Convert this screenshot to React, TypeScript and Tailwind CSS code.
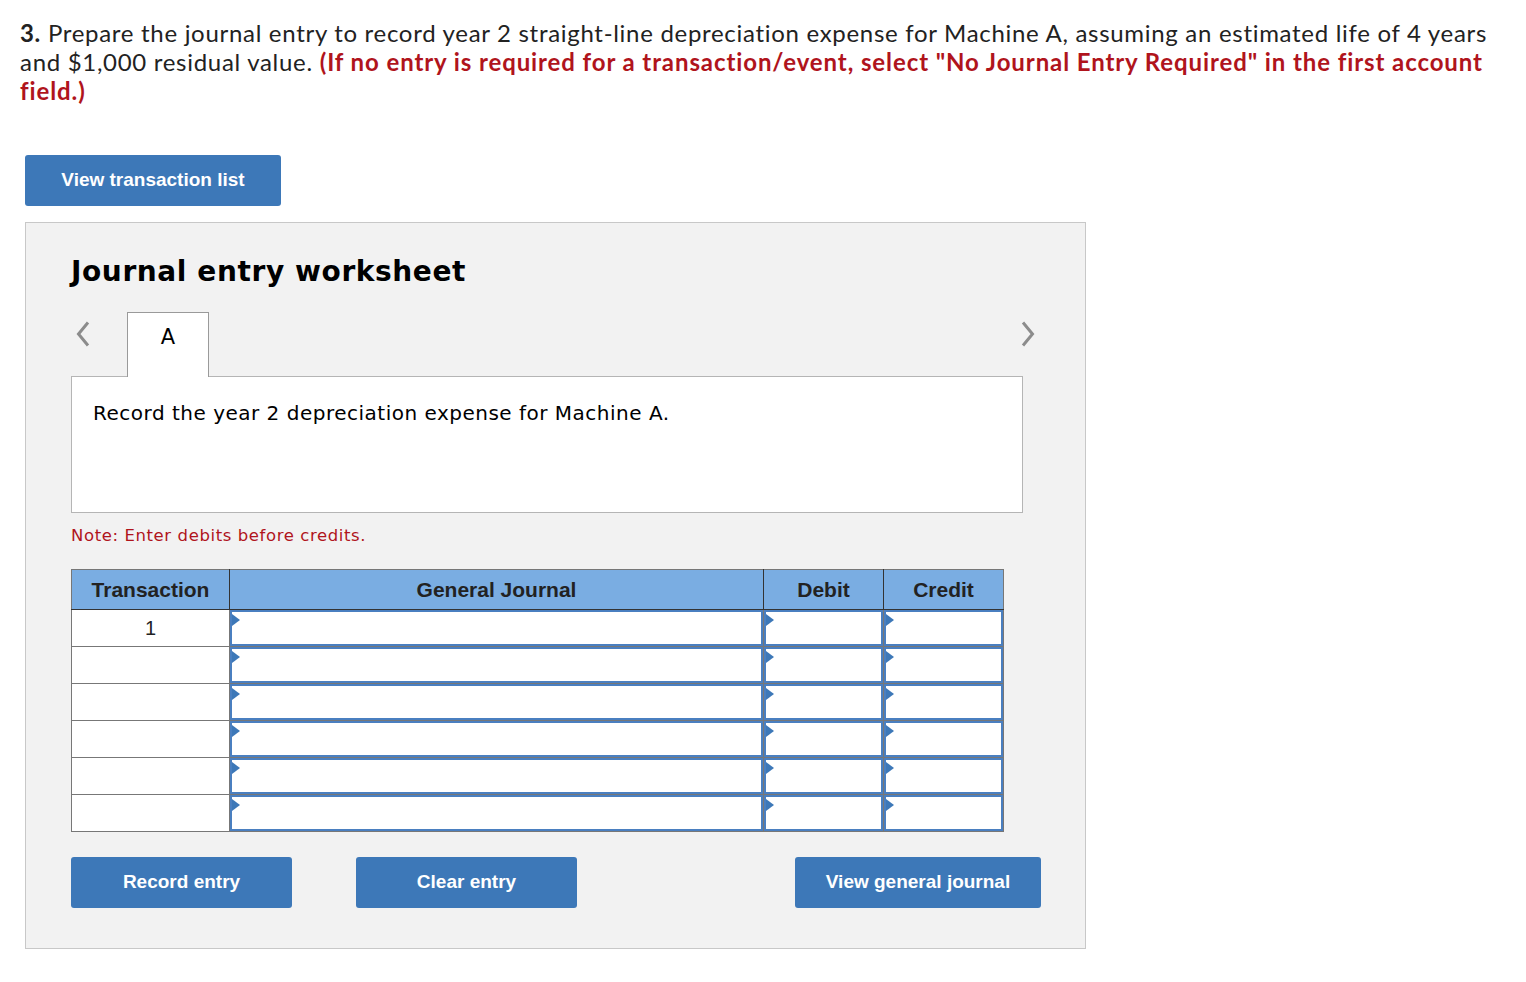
import React from "react"

const rows = [1, 2, 3, 4, 5, 6]

const Marker = () => (
  <span className="absolute left-0 top-[2px] w-0 h-0 border-y-[6px] border-y-transparent border-l-[8px] border-l-[#3d78b8]" />
)

const InputCell = () => (
  <td className="border border-[#777] p-0 h-[37px]">
    <div className="relative h-full w-full border-2 border-[#4a7fc0] bg-white">
      <Marker />
    </div>
  </td>
)

const Chevron = ({ dir }: { dir: "left" | "right" }) => (
  <svg width="16" height="26" viewBox="0 0 16 26" className="text-[#8c8c8c]">
    <path
      d={dir === "left" ? "M13 1.5 L3.5 13 L13 24.5" : "M3 1.5 L12.5 13 L3 24.5"}
      fill="none"
      stroke="currentColor"
      strokeWidth="3"
    />
  </svg>
)

const BlueButton = ({ label, className }: { label: string; className: string }) => (
  <button
    className={`h-[51px] rounded-[3px] bg-[#3d78b8] text-white font-bold text-[19px] font-['Liberation_Sans',Arial,sans-serif] ${className}`}
  >
    {label}
  </button>
)

export default function App() {
  return (
    <div className="bg-white min-h-[982px] px-5 pt-[18px] font-['Liberation_Sans',Arial,sans-serif]">
      <p className="font-['Lato',sans-serif] text-[24px] leading-[29px] tracking-[0.7px] text-[#222] whitespace-nowrap">
        <b>3.</b> Prepare the journal entry to record year 2 straight-line depreciation expense for Machine A, assuming an estimated life of 4 years
        <br />
        and $1,000 residual value.{" "}
        <b className="text-[#b0141c] tracking-[0.9px]">
          (If no entry is required for a transaction/event, select "No Journal Entry Required" in the first account
          <br />
          field.)
        </b>
      </p>

      <BlueButton label="View transaction list" className="mt-[50px] ml-[5px] w-[256px]" />

      <div className="mt-4 ml-[5px] w-[1061px] border border-[#c8c8c8] bg-[#f2f2f2] pl-[45px] pt-[30px] pb-[40px] font-['DejaVu_Sans',Verdana,sans-serif]">
        <h2 className="text-[28px] tracking-[0.6px] font-bold leading-[38px] text-black">Journal entry worksheet</h2>

        <div className="mt-[21px] w-[952px] flex items-end">
          <div className="w-[56px] h-[64px] flex items-start pt-[9px] pl-[4px]">
            <Chevron dir="left" />
          </div>
          <div className="w-[82px] h-[65px] bg-white border border-[#9a9a9a] border-b-0 -mb-px relative z-10 flex justify-center pt-[9px] text-[21px] text-black">
            A
          </div>
          <div className="flex-1" />
          <div className="h-[64px] flex items-start pt-[9px] -mr-[13px]">
            <Chevron dir="right" />
          </div>
        </div>

        <div className="w-[952px] h-[137px] bg-white border border-[#b5b5b5] px-[21px] pt-[21px] text-[20px] tracking-[0.5px] text-black">
          Record the year 2 depreciation expense for Machine A.
        </div>

        <p className="mt-[11px] text-[16.5px] tracking-[0.6px] text-[#b0141c]">Note: Enter debits before credits.</p>

        <table className="mt-[20px] border-collapse bg-white font-['Liberation_Sans',Arial,sans-serif]">
          <thead>
            <tr className="bg-[#7aade2] text-[21px] font-bold text-[#222] h-[40px]">
              <th className="w-[158px] border border-[#777] border-r-[#333] border-b-[#333]">Transaction</th>
              <th className="w-[534px] border border-[#777] border-x-[#333] border-b-[#333]">General Journal</th>
              <th className="w-[120px] border border-[#777] border-x-[#333] border-b-[#333]">Debit</th>
              <th className="w-[120px] border border-[#777] border-l-[#333] border-b-[#333]">Credit</th>
            </tr>
          </thead>
          <tbody>
            {rows.map((r) => (
              <tr key={r} className="h-[37px]">
                <td className="border border-[#777] text-center text-[20px] text-[#222] align-middle">
                  {r === 1 ? "1" : ""}
                </td>
                <InputCell />
                <InputCell />
                <InputCell />
              </tr>
            ))}
          </tbody>
        </table>

        <div className="mt-[25px] flex w-[970px]">
          <BlueButton label="Record entry" className="w-[221px]" />
          <BlueButton label="Clear entry" className="w-[221px] ml-[64px]" />
          <div className="flex-1" />
          <BlueButton label="View general journal" className="w-[246px]" />
        </div>
      </div>
    </div>
  )
}
